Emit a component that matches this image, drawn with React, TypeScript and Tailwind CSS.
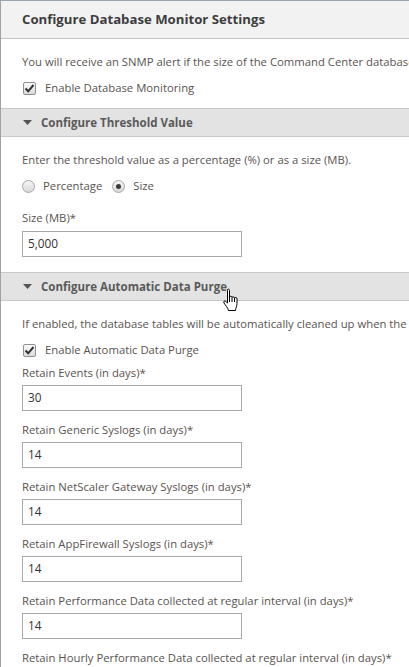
import React from 'react';

const FONT = { fontFamily: '"Open Sans", "Noto Sans", sans-serif' };

const retainFields = [
  { label: 'Retain Events (in days)*', value: '30' },
  { label: 'Retain Generic Syslogs (in days)*', value: '14' },
  { label: 'Retain NetScaler Gateway Syslogs (in days)*', value: '14' },
  { label: 'Retain AppFirewall Syslogs (in days)*', value: '14' },
  { label: 'Retain Performance Data collected at regular interval (in days)*', value: '14' },
  { label: 'Retain Hourly Performance Data collected at regular interval (in days)*', value: '14' },
];

function CheckBox() {
  return (
    <span className="w-[13px] h-[13px] shrink-0 border border-[#8f8f8f] rounded-[2px] bg-gradient-to-b from-[#fafafa] to-[#dcdcdc] flex items-center justify-center">
      <svg width="11" height="11" viewBox="0 0 11 11">
        <path d="M1.5 5.5 L4.2 8.3 L9.5 2" fill="none" stroke="#333" strokeWidth="2" />
      </svg>
    </span>
  );
}

function Radio({ checked }: { checked?: boolean }) {
  return (
    <span className="w-[13px] h-[13px] shrink-0 rounded-full border border-[#a8a8a8] bg-gradient-to-b from-[#f6f6f6] to-[#d8d8d8] flex items-center justify-center">
      {checked && <span className="w-[5px] h-[5px] rounded-full bg-[#3a3a3a]" />}
    </span>
  );
}

function SectionHeader({ title }: { title: string }) {
  return (
    <div className="h-[29px] bg-[#e3e3e3] border-y border-[#c8c8c8] flex items-center pl-[22px] gap-[9px]">
      <svg width="9" height="5" viewBox="0 0 9 5">
        <path d="M0 0 H9 L4.5 5 Z" fill="#555" />
      </svg>
      <span className="text-[11.5px] font-bold text-[#5a5a5a]">{title}</span>
    </div>
  );
}

function TextInput({ value }: { value: string }) {
  return (
    <div className="w-[220px] h-[26px] border border-[#a9a9a9] bg-white flex items-center pl-[5px] text-[11.8px] text-[#333]">
      {value}
    </div>
  );
}

function HandCursor() {
  return (
    <svg
      className="absolute left-[222px] top-[288px]"
      width="20"
      height="24"
      viewBox="0 0 20 24"
    >
      <path
        d="M5.5 1.5 C6.5 0.8 7.5 1.2 7.5 2.5 V9 C8 8 10 8 10 9.5 C10.5 8.5 12.5 8.5 12.5 10 C13 9.2 15 9.2 15 10.8 V15.5 C15 18 13.8 19.5 13.5 22.5 H6.5 C6 20 3.5 17.5 2 15 C1.2 13.5 2.5 12.2 3.8 13.4 L5.5 15 V2.5 Z"
        fill="#fff"
        stroke="#000"
        strokeWidth="1"
        strokeLinejoin="round"
      />
      <path d="M10 9.5 V14 M12.5 10 V14 M7.5 9 V14" stroke="#000" strokeWidth="1" />
    </svg>
  );
}

export default function App() {
  return (
    <div className="relative w-[409px] h-[667px] overflow-hidden bg-white text-[#595350]" style={FONT}>
      <div className="border-l border-t border-[#9aa3ad] min-h-full">
        {/* Panel title */}
        <div className="h-[38px] bg-[#f2f2f2] border-b border-[#c4c4c4] flex items-center pl-[21px]">
          <span className="text-[13.2px] font-bold text-[#3d3d3d] whitespace-nowrap">
            Configure Database Monitor Settings
          </span>
        </div>

        {/* Monitoring toggle */}
        <div className="pl-[21px] pt-[13px] pb-[10px] text-[11.3px] whitespace-nowrap">
          <p className="h-[20px] leading-[20px]">
            You will receive an SNMP alert if the size of the Command Center database exceeds the threshold value.
          </p>
          <label className="mt-[6px] h-[20px] flex items-center gap-[9px] pl-[1px]">
            <CheckBox />
            <span>Enable Database Monitoring</span>
          </label>
        </div>

        <SectionHeader title="Configure Threshold Value" />

        <div className="pl-[21px] pt-[13px] pb-[15px] text-[11.3px] whitespace-nowrap">
          <p className="h-[20px] leading-[20px]">
            Enter the threshold value as a percentage (%) or as a size (MB).
          </p>
          <div className="mt-[6px] h-[20px] flex items-center">
            <Radio />
            <span className="ml-[8px]">Percentage</span>
            <span className="ml-[10px]">
              <Radio checked />
            </span>
            <span className="ml-[8px]">Size</span>
          </div>
          <p className="mt-[12px] h-[20px] leading-[20px]">Size (MB)*</p>
          <div className="mt-[3px]">
            <TextInput value="5,000" />
          </div>
        </div>

        <SectionHeader title="Configure Automatic Data Purge" />

        <div className="pl-[21px] pt-[13px] text-[11.3px] whitespace-nowrap">
          <p className="h-[20px] leading-[20px]">
            If enabled, the database tables will be automatically cleaned up when the threshold value is reached.
          </p>
          <label className="mt-[6px] h-[20px] flex items-center gap-[9px] pl-[1px]">
            <CheckBox />
            <span>Enable Automatic Data Purge</span>
          </label>
          <div className="flex flex-col gap-[9px] mt-[3px]">
            {retainFields.map((f) => (
              <div key={f.label}>
                <p className="h-[20px] leading-[20px]">{f.label}</p>
                <div className="mt-[2px]">
                  <TextInput value={f.value} />
                </div>
              </div>
            ))}
          </div>
        </div>
      </div>
      <HandCursor />
    </div>
  );
}
